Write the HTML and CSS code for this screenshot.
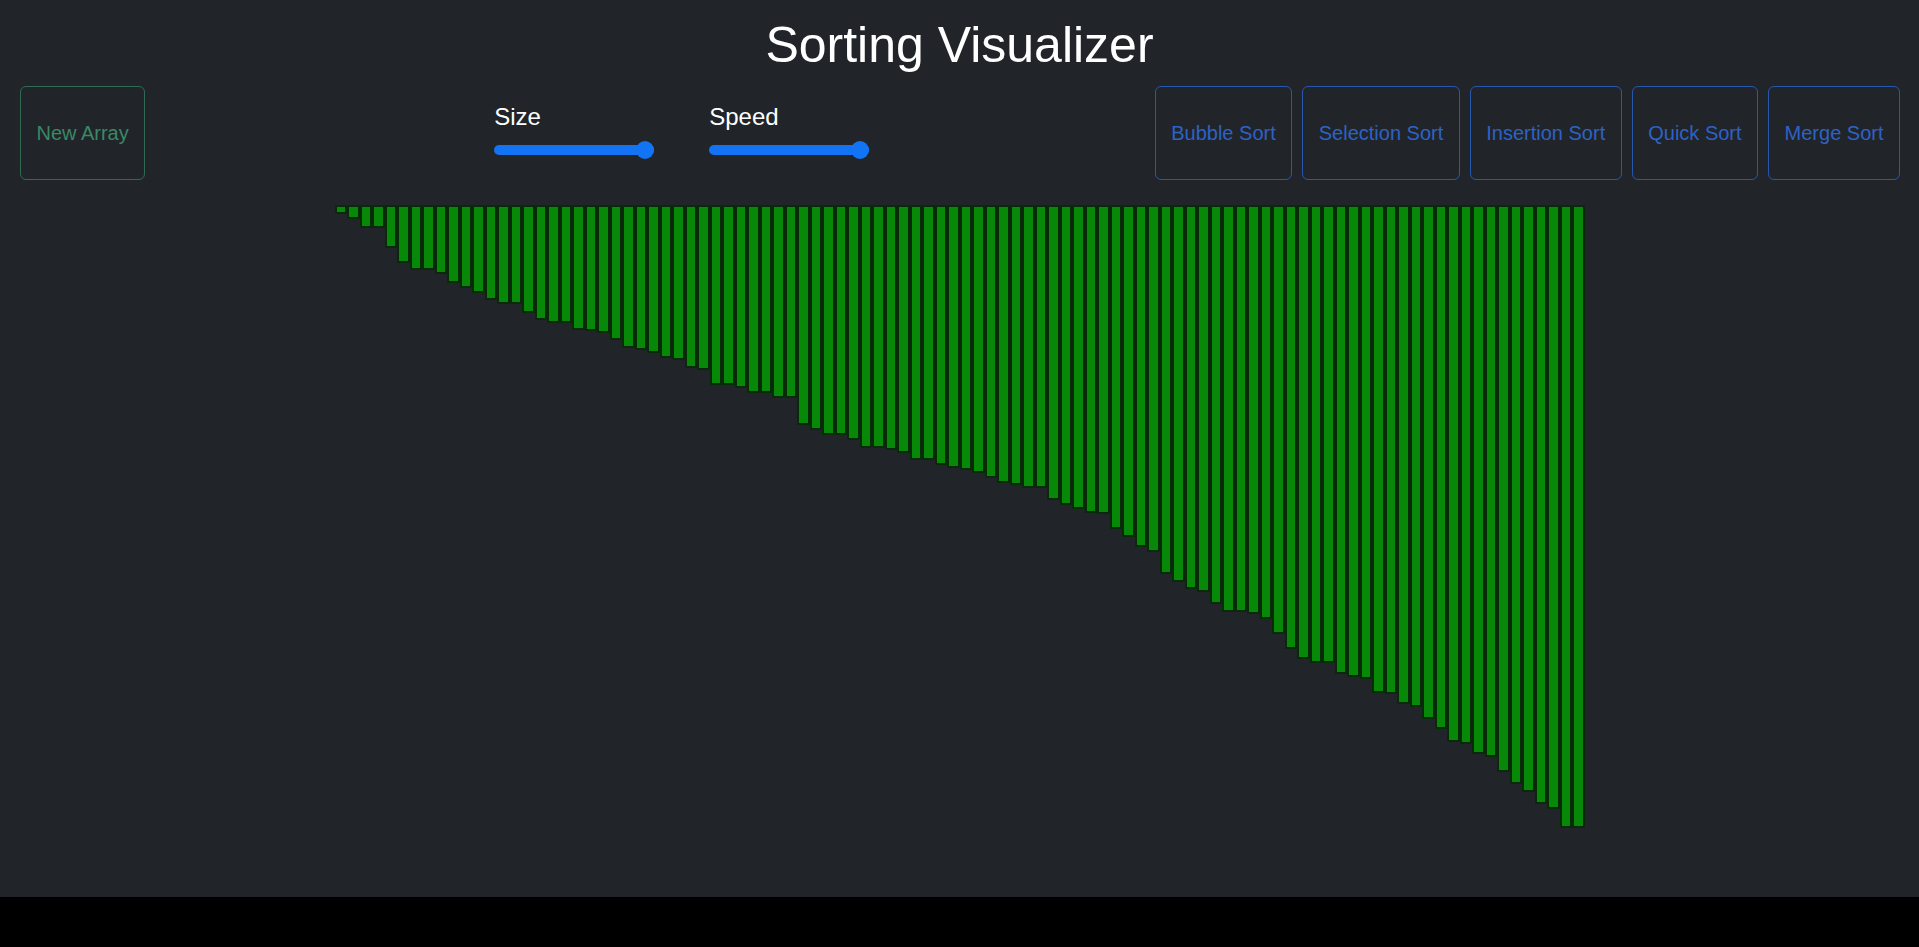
FILE: index.html
```html
<!DOCTYPE html>
<html lang="en">
<head>
<meta charset="utf-8">
<title>Sorting Visualizer</title>
<link rel="stylesheet" href="styles.css">
</head>
<body>
<div class="app">
  <h1 class="title">Sorting Visualizer</h1>
  <div class="toolbar">
    <button class="btn btn-success">New Array</button>
    <div class="sliders">
      <div class="slider-group">
        <label class="slider-label" for="size">Size</label>
        <input id="size" class="range" type="range" min="5" max="100" value="100">
      </div>
      <div class="slider-group">
        <label class="slider-label" for="speed">Speed</label>
        <input id="speed" class="range" type="range" min="1" max="100" value="100">
      </div>
    </div>
    <div class="sorts">
      <button class="btn btn-primary">Bubble Sort</button>
      <button class="btn btn-primary">Selection Sort</button>
      <button class="btn btn-primary">Insertion Sort</button>
      <button class="btn btn-primary">Quick Sort</button>
      <button class="btn btn-primary">Merge Sort</button>
    </div>
  </div>
  <div class="bars">
    <div class="bar" style="height:9px"></div>
    <div class="bar" style="height:14px"></div>
    <div class="bar" style="height:23px"></div>
    <div class="bar" style="height:23px"></div>
    <div class="bar" style="height:43px"></div>
    <div class="bar" style="height:58px"></div>
    <div class="bar" style="height:65px"></div>
    <div class="bar" style="height:65px"></div>
    <div class="bar" style="height:69px"></div>
    <div class="bar" style="height:78px"></div>
    <div class="bar" style="height:83px"></div>
    <div class="bar" style="height:88px"></div>
    <div class="bar" style="height:95px"></div>
    <div class="bar" style="height:99px"></div>
    <div class="bar" style="height:99px"></div>
    <div class="bar" style="height:108px"></div>
    <div class="bar" style="height:115px"></div>
    <div class="bar" style="height:118px"></div>
    <div class="bar" style="height:118px"></div>
    <div class="bar" style="height:125px"></div>
    <div class="bar" style="height:126px"></div>
    <div class="bar" style="height:128px"></div>
    <div class="bar" style="height:135px"></div>
    <div class="bar" style="height:143px"></div>
    <div class="bar" style="height:145px"></div>
    <div class="bar" style="height:148px"></div>
    <div class="bar" style="height:153px"></div>
    <div class="bar" style="height:155px"></div>
    <div class="bar" style="height:163px"></div>
    <div class="bar" style="height:165px"></div>
    <div class="bar" style="height:180px"></div>
    <div class="bar" style="height:180px"></div>
    <div class="bar" style="height:183px"></div>
    <div class="bar" style="height:188px"></div>
    <div class="bar" style="height:188px"></div>
    <div class="bar" style="height:193px"></div>
    <div class="bar" style="height:193px"></div>
    <div class="bar" style="height:220px"></div>
    <div class="bar" style="height:225px"></div>
    <div class="bar" style="height:230px"></div>
    <div class="bar" style="height:230px"></div>
    <div class="bar" style="height:235px"></div>
    <div class="bar" style="height:243px"></div>
    <div class="bar" style="height:243px"></div>
    <div class="bar" style="height:245px"></div>
    <div class="bar" style="height:248px"></div>
    <div class="bar" style="height:255px"></div>
    <div class="bar" style="height:255px"></div>
    <div class="bar" style="height:260px"></div>
    <div class="bar" style="height:263px"></div>
    <div class="bar" style="height:265px"></div>
    <div class="bar" style="height:268px"></div>
    <div class="bar" style="height:273px"></div>
    <div class="bar" style="height:278px"></div>
    <div class="bar" style="height:280px"></div>
    <div class="bar" style="height:283px"></div>
    <div class="bar" style="height:283px"></div>
    <div class="bar" style="height:295px"></div>
    <div class="bar" style="height:300px"></div>
    <div class="bar" style="height:304px"></div>
    <div class="bar" style="height:308px"></div>
    <div class="bar" style="height:309px"></div>
    <div class="bar" style="height:324px"></div>
    <div class="bar" style="height:332px"></div>
    <div class="bar" style="height:342px"></div>
    <div class="bar" style="height:347px"></div>
    <div class="bar" style="height:369px"></div>
    <div class="bar" style="height:377px"></div>
    <div class="bar" style="height:384px"></div>
    <div class="bar" style="height:387px"></div>
    <div class="bar" style="height:399px"></div>
    <div class="bar" style="height:407px"></div>
    <div class="bar" style="height:407px"></div>
    <div class="bar" style="height:409px"></div>
    <div class="bar" style="height:414px"></div>
    <div class="bar" style="height:429px"></div>
    <div class="bar" style="height:444px"></div>
    <div class="bar" style="height:454px"></div>
    <div class="bar" style="height:458px"></div>
    <div class="bar" style="height:458px"></div>
    <div class="bar" style="height:469px"></div>
    <div class="bar" style="height:472px"></div>
    <div class="bar" style="height:474px"></div>
    <div class="bar" style="height:488px"></div>
    <div class="bar" style="height:489px"></div>
    <div class="bar" style="height:499px"></div>
    <div class="bar" style="height:502px"></div>
    <div class="bar" style="height:514px"></div>
    <div class="bar" style="height:524px"></div>
    <div class="bar" style="height:537px"></div>
    <div class="bar" style="height:539px"></div>
    <div class="bar" style="height:549px"></div>
    <div class="bar" style="height:552px"></div>
    <div class="bar" style="height:567px"></div>
    <div class="bar" style="height:579px"></div>
    <div class="bar" style="height:587px"></div>
    <div class="bar" style="height:599px"></div>
    <div class="bar" style="height:604px"></div>
    <div class="bar" style="height:623px"></div>
    <div class="bar" style="height:623px"></div>
  </div>
</div>
<div class="letterbox"></div>
</body>
</html>
```

FILE: styles.css
```css
html, body {
  margin: 0;
  padding: 0;
  background: #000;
}

body {
  font-family: "Liberation Sans", Arial, sans-serif;
}

.app {
  height: 897px;
  background: #212529;
  overflow: hidden;
}

.title {
  margin: 0;
  padding-top: 15px;
  height: 60px;
  line-height: 60px;
  font-size: 50px;
  font-weight: 400;
  color: #ffffff;
  text-align: center;
}

.toolbar {
  display: flex;
  align-items: flex-start;
  margin-top: 11px;
  padding: 0 19px 0 20px;
  height: 94px;
}

.btn {
  height: 94px;
  padding: 0 15.5px;
  border: 1px solid;
  border-radius: 6px;
  background: transparent;
  font-family: inherit;
  font-size: 20px;
  line-height: 1;
  white-space: nowrap;
}

.btn-success {
  color: #3a8866;
  border-color: #2e6b50;
}

.btn-primary {
  color: #2d62c6;
  border-color: #2857b0;
}

.sliders {
  display: flex;
  gap: 55px;
  margin-left: 349px;
  padding-top: 16px;
}

.slider-group {
  width: 160px;
  display: flex;
  flex-direction: column;
}

.slider-label {
  font-size: 24px;
  line-height: 29px;
  color: #ffffff;
}

.range {
  -webkit-appearance: none;
  appearance: none;
  width: 160px;
  height: 18px;
  margin: 10px 0 0;
  padding: 0;
  background: transparent;
}

.range::-webkit-slider-runnable-track {
  height: 10px;
  background: #1273f5;
  border-radius: 5px;
  border: none;
}

.range::-webkit-slider-thumb {
  -webkit-appearance: none;
  appearance: none;
  width: 18px;
  height: 18px;
  margin-top: -4px;
  border: none;
  border-radius: 50%;
  background: #1273f5;
}

.sorts {
  display: flex;
  gap: 10px;
  margin-left: auto;
}

.bars {
  display: flex;
  justify-content: center;
  align-items: flex-start;
  margin-top: 25px;
}

.bar {
  box-sizing: border-box;
  flex: none;
  width: 12.5px;
  border: 2px solid #082a08;
  background: #088808;
}

.letterbox {
  height: 50px;
  background: #000;
}
```
